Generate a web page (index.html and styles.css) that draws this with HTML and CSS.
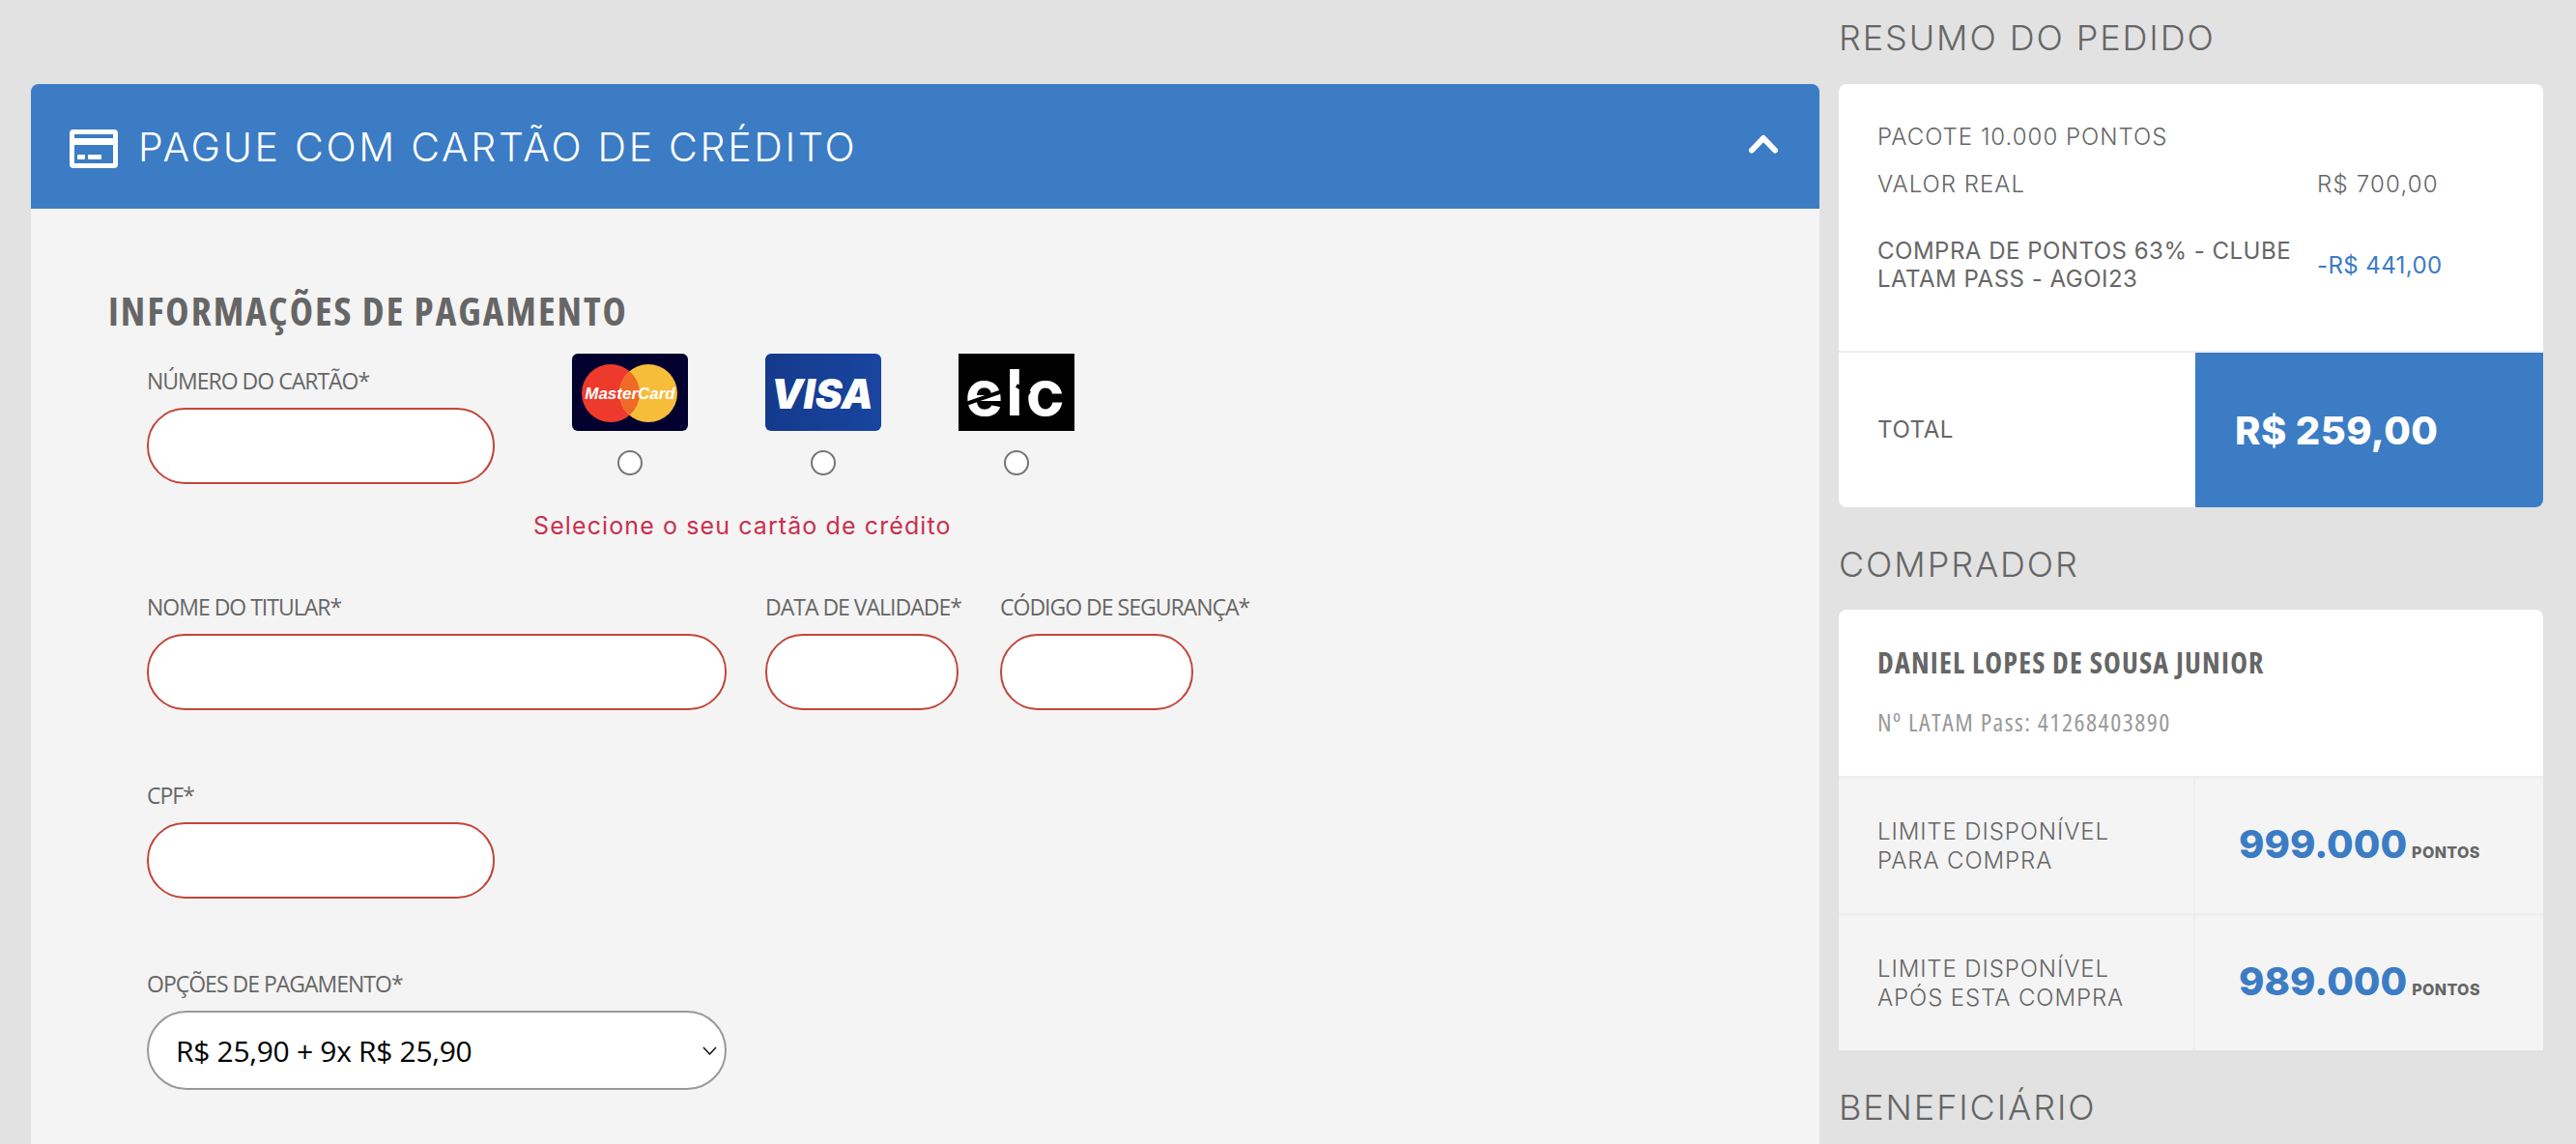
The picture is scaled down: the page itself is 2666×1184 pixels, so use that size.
FILE: index.html
```html
<!DOCTYPE html>
<html lang="pt-BR">
<head>
<meta charset="utf-8">
<title>Pague com cartão de crédito</title>
<link rel="stylesheet" href="styles.css">
</head>
<body>
<div class="page">
  <main class="payment">
    <header class="payment-head">
      <svg class="card-icon" viewBox="0 0 50 40" aria-hidden="true">
        <rect width="50" height="40" rx="4" fill="#fff"/>
        <rect x="5" y="5" width="40" height="4" fill="#3b7cc4"/>
        <rect x="5" y="16" width="40" height="19" fill="#3b7cc4"/>
        <rect x="8" y="26" width="8" height="5" rx="1" fill="#fff"/>
        <rect x="19" y="26" width="14" height="5" rx="1" fill="#fff"/>
      </svg>
      <span class="payment-title">PAGUE COM CARTÃO DE CRÉDITO</span>
      <svg class="chevron" viewBox="0 0 30 20" aria-hidden="true">
        <path d="M3 16.500 15 4 27 16.500" fill="none" stroke="#fff" stroke-width="6" stroke-linecap="round" stroke-linejoin="round"/>
      </svg>
    </header>
    <section class="payment-body">
      <h3 class="section-title">INFORMAÇÕES DE PAGAMENTO</h3>
      <form class="form">
        <div class="form-row first-row">
          <div class="field number-field">
            <label class="field-label">NÚMERO DO CARTÃO*</label>
            <input class="text-input w-md invalid" type="text">
          </div>
          <div class="brands">
            <div class="brand-list">
              <div class="brand">
                <svg class="brand-logo" viewBox="0 0 120 80">
                  <rect width="120" height="80" rx="6" fill="#02002e"/>
                  <circle cx="40" cy="41" r="30" fill="#ee3a2c"/>
                  <circle cx="79" cy="41" r="30" fill="#f6bd3b"/>
                  <path d="M59.500 18.200A30 30 0 0 1 59.500 63.800 30 30 0 0 1 59.500 18.200z" fill="#ef6a26"/>
                  <text class="mc-text" x="60" y="47">MasterCard</text>
                </svg>
                <input class="radio" type="radio" name="brand">
              </div>
              <div class="brand">
                <svg class="brand-logo" viewBox="0 0 120 80">
                  <defs>
                    <linearGradient id="visaBg" x1="0" x2="1" y1="0" y2="0">
                      <stop offset="0" stop-color="#143a8c"/>
                      <stop offset="1" stop-color="#19459f"/>
                    </linearGradient>
                  </defs>
                  <rect width="120" height="80" rx="6" fill="url(#visaBg)"/>
                  <text class="visa-text" x="59" y="57">VISA</text>
                </svg>
                <input class="radio" type="radio" name="brand">
              </div>
              <div class="brand">
                <svg class="brand-logo" viewBox="0 0 120 80">
                  <rect width="120" height="80" fill="#000"/>
                  <text class="elo-text" x="60" y="64">elo</text>
                  <path d="M2 54 48 38" stroke="#000" stroke-width="4" fill="none"/>
                  <path d="M96 46h22" stroke="#000" stroke-width="9" fill="none"/>
                  <path d="M60 33l14 8" stroke="#000" stroke-width="4" fill="none"/>
                </svg>
                <input class="radio" type="radio" name="brand">
              </div>
            </div>
            <p class="brand-error">Selecione o seu cartão de crédito</p>
          </div>
        </div>
        <div class="form-row">
          <div class="field">
            <label class="field-label">NOME DO TITULAR*</label>
            <input class="text-input w-lg invalid" type="text">
          </div>
          <div class="field date-field">
            <label class="field-label">DATA DE VALIDADE*</label>
            <input class="text-input w-sm invalid" type="text">
          </div>
          <div class="field">
            <label class="field-label">CÓDIGO DE SEGURANÇA*</label>
            <input class="text-input w-sm invalid" type="text">
          </div>
        </div>
        <div class="form-row">
          <div class="field">
            <label class="field-label">CPF*</label>
            <input class="text-input w-md invalid" type="text">
          </div>
        </div>
        <div class="form-row">
          <div class="field">
            <label class="field-label">OPÇÕES DE PAGAMENTO*</label>
            <div class="select-wrap w-lg">
              <select class="select-input">
                <option>R$ 25,90 + 9x R$ 25,90</option>
              </select>
              <svg class="select-arrow" viewBox="0 0 15 9" aria-hidden="true">
                <path d="M1 1l6.500 7L14 1" fill="none" stroke="#111" stroke-width="1.500"/>
              </svg>
            </div>
          </div>
        </div>
      </form>
    </section>
  </main>
  <aside class="sidebar">
    <h2 class="side-title">RESUMO DO PEDIDO</h2>
    <div class="side-card">
      <div class="summary">
        <div class="summary-row"><span class="summary-label">PACOTE 10.000 PONTOS</span></div>
        <div class="summary-row"><span class="summary-label">VALOR REAL</span><span class="summary-value">R$ 700,00</span></div>
        <div class="summary-row discount">
          <span class="summary-label strong">COMPRA DE PONTOS 63% - CLUBE LATAM PASS - AGOI23</span>
          <span class="summary-value blue">-R$ 441,00</span>
        </div>
      </div>
      <div class="total">
        <div class="total-label">TOTAL</div>
        <div class="total-value">R$ 259,00</div>
      </div>
    </div>
    <h2 class="side-title">COMPRADOR</h2>
    <div class="side-card flat-bottom">
      <div class="buyer">
        <div class="buyer-name">DANIEL LOPES DE SOUSA JUNIOR</div>
        <div class="buyer-id">Nº LATAM Pass: 41268403890</div>
      </div>
      <div class="limit">
        <div class="limit-label">LIMITE DISPONÍVEL<br>PARA COMPRA</div>
        <div class="limit-value"><b class="points">999.000</b><span class="points-unit">PONTOS</span></div>
      </div>
      <div class="limit">
        <div class="limit-label">LIMITE DISPONÍVEL<br>APÓS ESTA COMPRA</div>
        <div class="limit-value"><b class="points">989.000</b><span class="points-unit">PONTOS</span></div>
      </div>
    </div>
    <h2 class="side-title">BENEFICIÁRIO</h2>
  </aside>
</div>
</body>
</html>
```

FILE: styles.css
```css
* { box-sizing: border-box; }
html, body { margin: 0; height: 100%; }
body { background: #e2e2e2; color: #666; font-family: "Inter", "Liberation Sans", sans-serif; overflow: hidden; }

.page { display: flex; gap: 20px; height: 1184px; padding: 0 34px 0 32px; overflow: hidden; }

.payment { width: 1851px; flex: none; padding-top: 87px; display: flex; flex-direction: column; }
.payment-head { height: 129px; flex: none; display: flex; align-items: center; padding: 0 43px 0 40px; background: #3b7cc4; border-radius: 8px 8px 0 0; color: #fff; }
.card-icon { width: 50px; height: 40px; margin-top: 4px; flex: none; }
.payment-title { margin-left: 21px; font-size: 41px; font-weight: 300; letter-spacing: 2.7px; white-space: nowrap; }
.chevron { width: 30px; height: 20px; margin-left: auto; margin-top: -5px; flex: none; }

.payment-body { flex: 1; background: #f4f4f4; padding: 86px 0 0 80px; }
.section-title { height: 40px; margin: 0 0 24px; font: 700 41px/38px "Open Sans", "Liberation Sans", sans-serif; font-stretch: 75%; letter-spacing: 2px; color: #666; white-space: nowrap; }
.form { margin-left: 40px; }
.form-row { display: flex; gap: 40px; margin-top: 77px; }
.form-row.first-row { margin-top: 0; gap: 0; margin-bottom: -19px; }

.field { display: flex; flex-direction: column; }
.number-field { padding-top: 17px; width: 400px; }
.date-field { width: 203px; }
.field-label { height: 24px; margin-bottom: 15px; font: 400 23px/22px "Open Sans", "Liberation Sans", sans-serif; letter-spacing: -1px; color: #666; white-space: nowrap; }
.text-input { height: 79px; border: 2px solid #999; border-radius: 39px; background: #fff; padding: 0 20px; outline: none; }
.text-input.invalid { border-color: #c2463c; }
.select-wrap { position: relative; height: 82px; }
.select-input { appearance: none; width: 100%; height: 100%; border: 2px solid #999; border-radius: 41px; background: #fff; padding: 0 40px 0 28px; font: 400 30px "Open Sans", "Liberation Sans", sans-serif; letter-spacing: -0.3px; color: #000; }
.select-arrow { position: absolute; right: 10px; top: 37px; width: 15px; height: 9px; }
.w-sm { width: 200px; }
.w-md { width: 360px; }
.w-lg { width: 600px; }

.brand-list { display: flex; }
.brand { width: 200px; display: flex; flex-direction: column; align-items: center; }
.brand-logo { width: 120px; height: 80px; display: block; }
.radio { appearance: none; width: 26px; height: 26px; margin: 20px 0 0; border: 2px solid #767676; border-radius: 50%; background: #fff; }
.brand-error { margin: 37px 0 0; font-size: 25px; line-height: 30px; font-weight: 400; color: #c8304f; letter-spacing: 1.1px; white-space: nowrap; }

.mc-text { font: italic 700 17px "Liberation Sans", sans-serif; fill: #fff; text-anchor: middle; }
.visa-text { font: italic 900 42px "Inter", "Liberation Sans", sans-serif; fill: #fff; text-anchor: middle; }
.elo-text { font: 700 66px "Inter", "Liberation Sans", sans-serif; letter-spacing: 3px; fill: #fff; text-anchor: middle; }

.sidebar { width: 729px; flex: none; }
.side-title { margin: 39px 0 27px; font-size: 36px; line-height: 40px; font-weight: 300; color: #666; letter-spacing: 1.9px; white-space: nowrap; }
.side-title:first-child { margin-top: 19px; margin-bottom: 28px; }
.side-card { background: #fff; border-radius: 8px; overflow: hidden; }
.side-card.flat-bottom { border-radius: 8px 8px 0 0; }

.summary { height: 278px; padding: 40px 0 0 40px; border-bottom: 2px solid #eee; }
.summary-row { display: flex; align-items: center; margin-bottom: 20px; font-size: 24px; line-height: 29px; font-weight: 300; letter-spacing: 1px; }
.summary-row.discount { margin-top: 40px; letter-spacing: 0.5px; }
.summary-label { width: 455px; padding-right: 10px; }
.summary-label.strong { font-weight: 400; }
.summary-value { letter-spacing: 1.2px; }
.summary-value.blue { color: #3b7cc4; font-weight: 400; letter-spacing: 0.4px; }
.total { display: flex; height: 160px; }
.total-label { width: 369px; padding-left: 40px; font-size: 24px; line-height: 160px; font-weight: 400; letter-spacing: 0.6px; }
.total-value { flex: 1; padding-left: 41px; background: #3b7cc4; color: #fff; font-size: 40px; line-height: 162px; font-weight: 800; letter-spacing: 0.4px; white-space: nowrap; }

.buyer { height: 175px; padding: 41px 0 0 40px; border-bottom: 3px solid #eee; }
.buyer-name { height: 30px; font: 700 30px/28px "Open Sans", "Liberation Sans", sans-serif; font-stretch: 75%; letter-spacing: 1.2px; color: #666; white-space: nowrap; }
.buyer-id { margin-top: 30px; font: 400 26px/30px "Open Sans", "Liberation Sans", sans-serif; font-stretch: 75%; letter-spacing: 1.5px; color: #999; white-space: nowrap; }
.limit { display: flex; height: 142px; background: #f4f4f4; border-bottom: 3px solid #eee; }
.limit:last-child { height: 139px; border-bottom: 0; }
.limit-label { width: 369px; flex: none; display: flex; align-items: center; padding-left: 40px; border-right: 2px solid #eee; font-size: 24px; line-height: 30px; font-weight: 300; letter-spacing: 0.9px; }
.limit-value { display: flex; align-items: baseline; padding: 43px 0 0 45px; }
.points { font-size: 40px; line-height: 50px; font-weight: 800; color: #3b7cc4; }
.points-unit { margin-left: 5px; font-size: 16px; font-weight: 800; color: #666; letter-spacing: 0.4px; }
```
